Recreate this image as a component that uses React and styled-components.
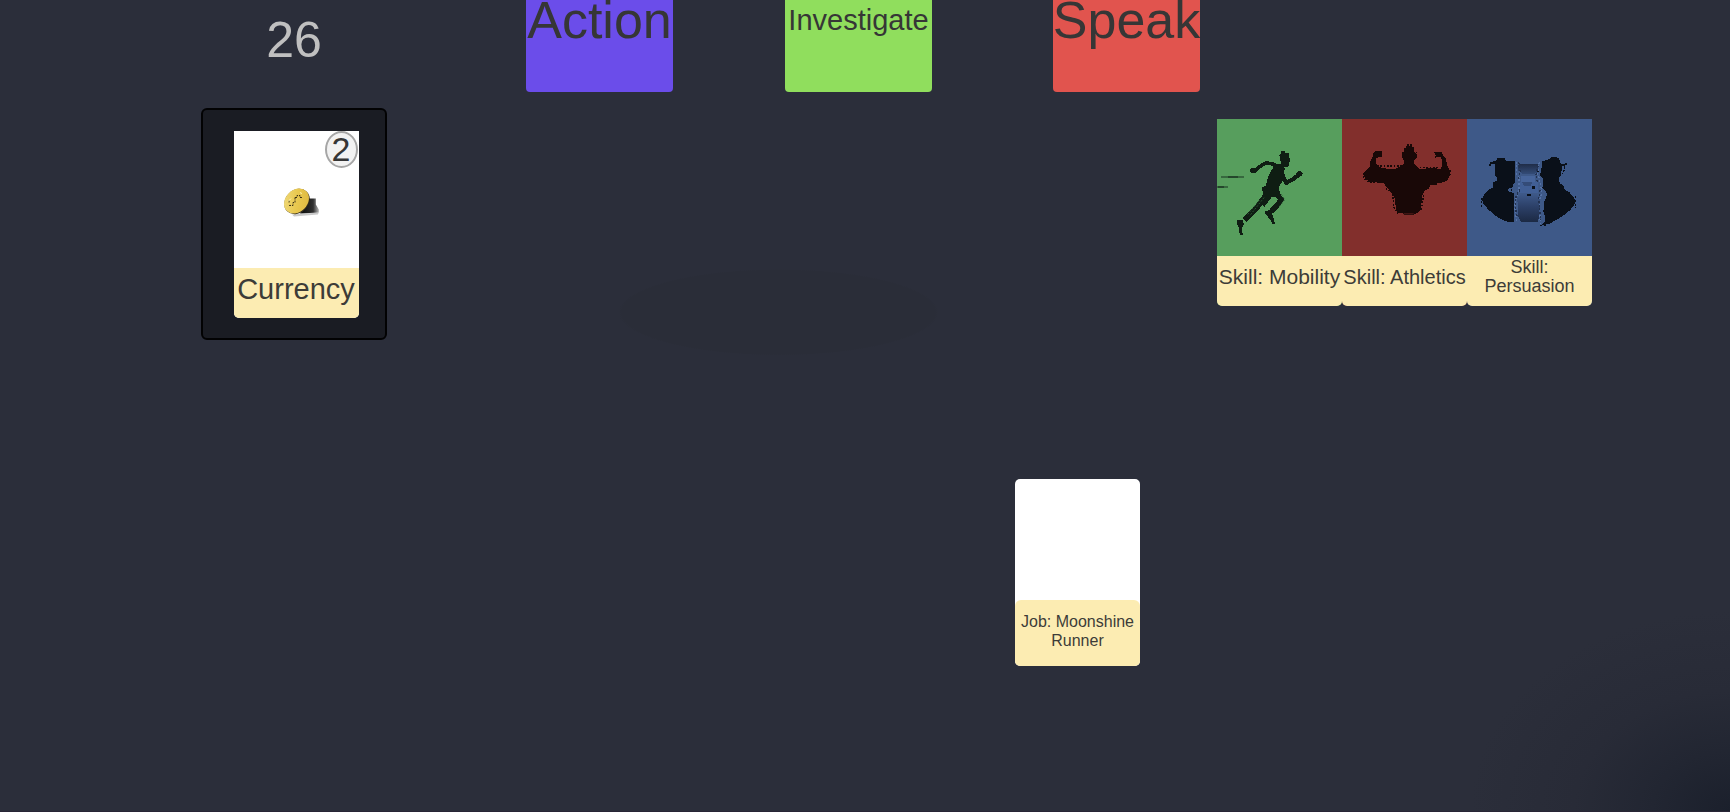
import React from "react";
import styled, { createGlobalStyle } from "styled-components";

const GlobalStyle = createGlobalStyle`
  *, *::before, *::after { box-sizing: border-box; }
  body {
    margin: 0;
    background: #2b2e3a;
    font-family: "Liberation Sans", Arial, sans-serif;
    color: #363636;
  }
`;

const Board = styled.main`
  display: flex;
  flex-direction: column;
  min-height: 100vh;
  border-bottom: 1px solid #282535;
  background:
    radial-gradient(ellipse 160px 43px at 45% 38.5%, #2a2d38 98%, transparent 100%),
    radial-gradient(ellipse 260px 200px at 100% 100%, #1b202c 0%, #222632 30%, #282b37 60%, transparent 100%),
    #2b2e3a;
`;

const TopBar = styled.header`
  display: grid;
  grid-template-columns: 201fr 186px 139fr 147px 112fr 147px 121fr 147px 530fr;
`;

const Counter = styled.output`
  grid-column: 2;
  color: #c0c0c0;
  font-size: 50px;
  line-height: 80px;
  text-align: center;
`;

const VerbButton = styled.button`
  grid-column: ${(p) => p.$column};
  display: flex;
  justify-content: center;
  align-items: flex-start;
  height: 92px;
  padding: 0;
  border: 0;
  border-radius: 0 0 4px 4px;
  background: ${(p) => p.$color};
  color: #363636;
  font-family: inherit;
  font-size: ${(p) => p.$size}px;
  line-height: 40px;
  white-space: nowrap;
  cursor: pointer;
`;

const CardsRow = styled.section`
  display: grid;
  grid-template-columns: 201fr 186px 830fr 375px 138fr;
  align-items: start;
  margin-top: 16px;
`;

const Slot = styled.div`
  grid-column: 2;
  display: flex;
  justify-content: center;
  padding: 21px 0 20px 4px;
  border: 2px solid #020203;
  border-radius: 6px;
  background: #1a1c23;
`;

const SkillHand = styled.div`
  grid-column: 4;
  display: flex;
  margin-top: 11px;
`;

const JobRow = styled.section`
  display: grid;
  grid-template-columns: 1015fr 125px 590fr;
  margin-top: 139px;
`;

const Card = styled.article`
  position: relative;
  grid-column: ${(p) => p.$column || "auto"};
  display: flex;
  flex-direction: column;
  width: 125px;
  height: 187px;
  overflow: hidden;
  border-radius: ${(p) => (p.$rounded ? "5px" : "0 0 5px 5px")};
  background: ${(p) => p.$color || "#ffffff"};
`;

const Art = styled.svg`
  display: block;
  flex: 1;
  min-height: 0;
  width: 100%;
`;

const BlankArt = styled.div`
  flex: 1;
`;

const Label = styled.h2`
  display: flex;
  justify-content: center;
  align-items: center;
  height: ${(p) => (p.$tall ? 66 : 50)}px;
  margin: 0;
  padding-bottom: ${(p) => (p.$tall ? 4 : 8)}px;
  border-radius: ${(p) => (p.$tall ? "6px 6px 0 0" : "0")};
  background: #fcecb2;
  color: #3d3c38;
  font-size: ${(p) => p.$size}px;
  font-weight: 400;
  line-height: ${(p) => (p.$wrap ? "19px" : "32px")};
  text-align: center;
  white-space: ${(p) => (p.$wrap ? "normal" : "nowrap")};
`;

const CountBadge = styled.span`
  position: absolute;
  top: 0;
  right: 1px;
  width: 33px;
  height: 37px;
  border: 2px solid #a6a6a6;
  border-radius: 50%;
  background: #f2f2f2;
  font-size: 34px;
  line-height: 32px;
  text-align: center;
`;

function CoinArt() {
  return (
    <Art viewBox="0 0 125 138" aria-hidden="true">
      <defs>
        <linearGradient id="coinShadow" x1="0" x2="1">
          <stop offset="0" stopColor="#080808" />
          <stop offset="0.7" stopColor="#303030" />
          <stop offset="1" stopColor="#b5b5b5" />
        </linearGradient>
        <linearGradient id="coinFace" x1="0" y1="0" x2="1" y2="1">
          <stop offset="0" stopColor="#f0dc82" />
          <stop offset="0.5" stopColor="#e9c84f" />
          <stop offset="1" stopColor="#dcb53c" />
        </linearGradient>
      </defs>
      <path d="M58 84 L85 82 L84 84 L60 86Z" fill="#c9c9c9" />
      <path d="M70 79 L75 68 L82 68 L82 74 L85 79 L85 82 L66 83Z" fill="url(#coinShadow)" />
      <ellipse cx="63" cy="71" rx="14" ry="11.500" transform="rotate(-45 63 71)" fill="#30291a" />
      <ellipse cx="62.500" cy="70.500" rx="14" ry="11" transform="rotate(-45 62.500 70.500)" fill="url(#coinFace)" />
      <path d="M61 67h2v-2h3v2h2 M61 67v5h-2v3h-4 M55 70v2" fill="none" stroke="#3b3015" strokeDasharray="2 1" />
      <path d="M54 71l3-3M66 62l2 1" stroke="#fff3b0" />
    </Art>
  );
}

function RunnerArt() {
  return (
    <Art viewBox="21 25 375 413" preserveAspectRatio="none" shapeRendering="crispEdges" aria-hidden="true">
      <g fill="#0f1d13">
        <path d="M214 122H226V126H237V140L240 148L237 164L231 171H214V158L211 150V138L207 134L213 130Z" />
        <path d="M184 162L214 160L224 172L222 200L216 214L206 232L210 248L196 262L160 256L156 232L168 226L174 200L182 184L190 170Z" />
        <path d="M120 176L130 172L142 174L140 186L124 188L120 183Z" />
        <path d="M258 190L264 183H274L279 188L276 196L262 201Z" />
        <path d="M82 330H100L101 344L96 352L98 375H92L86 362V350L81 342Z" />
        <path d="M166 302L182 300L188 316L195 340L188 341L178 325L166 311Z" />
      </g>
      <g fill="none" stroke="#0f1d13" strokeLinejoin="round">
        <path d="M136 179L148 169L168 157L194 162L200 172" strokeWidth="11" />
        <path d="M214 184L220 202L229 217L248 207L264 195" strokeWidth="13" />
        <path d="M196 246L214 268L202 284L184 304" strokeWidth="16" />
        <path d="M172 250L150 280L128 306L104 330" strokeWidth="17" />
        <path d="M176 252L154 282" strokeWidth="24" />
      </g>
      <path
        d="M162 262L118 318M148 270L112 314M214 252L224 268L206 292"
        fill="none"
        stroke="#2f5c37"
        strokeWidth="3"
        strokeDasharray="5 5"
      />
      <path d="M34 200h68M21 230h34" stroke="#22452a" strokeWidth="4" opacity="0.600" />
      <path d="M54 200h30M24 230h18" stroke="#12261a" strokeWidth="4" opacity="0.500" />
    </Art>
  );
}

function StrongmanArt() {
  return (
    <Art viewBox="21 25 375 413" preserveAspectRatio="none" shapeRendering="crispEdges" aria-hidden="true">
      <path
        fill="#190807"
        d="M208 112H214V106H232V110H238V124L245 130V142L238 148V160L246 168L254 176L286 173L318 175L322 164L320 148L316 140H306L298 142L302 136L298 126L306 123H320L324 136L332 142L336 164L342 174L346 188L342 202L334 212L316 218L304 217L306 223H288L280 236L268 242L262 256L260 276L256 298L248 308L236 314H210L204 310L186 308L182 290L180 266L172 250L160 236L150 226L148 219L124 216L104 214L92 206L86 194L88 184L104 170L105 152L112 144L114 130L122 121H140V140H132L124 144L122 156L130 168L146 174L180 175L198 168L206 160V148L200 140V128L207 122Z"
      />
      <g fill="none" stroke="#190807" strokeWidth="4" strokeDasharray="5 5">
        <path d="M126 167H200M202 124V144M245 124V144M216 103H236M254 172H310" />
        <path d="M86 188V206L102 216H146M345 180V198M152 234L174 246V270L178 296L190 310M266 244L264 270L258 300" />
      </g>
      <path d="M206 311H236" stroke="#5a1f1c" strokeWidth="3" />
    </Art>
  );
}

function TalkersArt() {
  return (
    <Art viewBox="21 25 375 413" preserveAspectRatio="none" shapeRendering="crispEdges" aria-hidden="true">
      <defs>
        <linearGradient id="hatShade" x1="0" x2="0" y1="0" y2="1">
          <stop offset="0" stopColor="#1f2c47" />
          <stop offset="1" stopColor="#344d79" />
        </linearGradient>
        <linearGradient id="coatShade" x1="0" x2="0" y1="0" y2="1">
          <stop offset="0" stopColor="#3d5888" />
          <stop offset="0.450" stopColor="#2c4068" />
          <stop offset="1" stopColor="#1c2a44" />
        </linearGradient>
      </defs>
      <path d="M181 160h53v12l-4 14-8 6h-34l-8-8-6-4v-14z" fill="url(#hatShade)" />
      <path d="M182 196h44v18h-44z" fill="#47659b" />
      <path d="M181 216h52v32h-52z" fill="#415f95" />
      <path d="M186 216h30l-4 12h-18z" fill="#344c78" />
      <path d="M172 262l12-10h48l8 10-2 48-4 25h-52l-8-19z" fill="url(#coatShade)" />
      <path d="M201 252h12v6h-12zM217 228h8v7h-8z" fill="#0a1019" />
      <path
        fill="#0a1019"
        d="M112 144h22l5 8h26v62l-6 10v6l-16 6 2 8 17 4v88l-20-1-22-10-18-12-18-16-15-18-3-14 6-12 12-14 15-7v-16l13-6v-7l-6-8-2-34-14-2v-4l16-3z"
      />
      <path
        fill="#0a1019"
        d="M247 152L269 146L275 139H289L298 145L300 157L306 162L320 159V164L306 168L303 195L296 204L299 218L311 227L314 238L328 246L340 260L346 272L343 284L331 299L314 313L294 326L268 341L243 346L255 334V318L250 305L252 278L262 250L254 240L247 233L250 217L248 203L240 194L244 176Z"
      />
      <g fill="none" strokeWidth="4" strokeDasharray="6 5">
        <path d="M170 154v36l7 12v42l-9 18-4 32 6 40 M238 154l-5 35 8 28 5 30-8 22 3 72" stroke="#5572a6" />
        <path d="M176 156l5 28-8 24 M234 166l-6 26 5 28 M180 238l-12 20-2 32 6 34 M240 240l-4 28 6 60" stroke="#22314f" />
        <path d="M134 240l12 6 M154 226v18 M232 184h14 M260 246h14 M90 162v10 M318 158l-10 34 M64 262v28 M346 258v34 M240 346h22" stroke="#0a1019" />
      </g>
    </Art>
  );
}

const verbs = [
  { name: "Action", color: "#6b4dea", size: 52, column: 4 },
  { name: "Investigate", color: "#90de5d", size: 29, column: 6 },
  { name: "Speak", color: "#e1544e", size: 52, column: 8 },
];

const skills = [
  { name: "Skill: Mobility", color: "#579e5d", size: 21, Picture: RunnerArt },
  { name: "Skill: Athletics", color: "#822f2c", size: 20, Picture: StrongmanArt },
  { name: "Skill: Persuasion", color: "#3e5988", size: 18, wrap: true, Picture: TalkersArt },
];

export default function App() {
  return (
    <>
      <GlobalStyle />
      <Board>
        <TopBar>
          <Counter>26</Counter>
          {verbs.map((verb) => (
            <VerbButton
              key={verb.name}
              type="button"
              $column={verb.column}
              $color={verb.color}
              $size={verb.size}
            >
              {verb.name}
            </VerbButton>
          ))}
        </TopBar>
        <CardsRow>
          <Slot>
            <Card>
              <CoinArt />
              <CountBadge>2</CountBadge>
              <Label $size={29}>Currency</Label>
            </Card>
          </Slot>
          <SkillHand>
            {skills.map(({ name, color, size, wrap, Picture }) => (
              <Card key={name} $color={color}>
                <Picture />
                <Label $size={size} $wrap={wrap}>{name}</Label>
              </Card>
            ))}
          </SkillHand>
        </CardsRow>
        <JobRow>
          <Card $column={2} $rounded>
            <BlankArt />
            <Label $size={16} $wrap $tall>Job: Moonshine Runner</Label>
          </Card>
        </JobRow>
      </Board>
    </>
  );
}
